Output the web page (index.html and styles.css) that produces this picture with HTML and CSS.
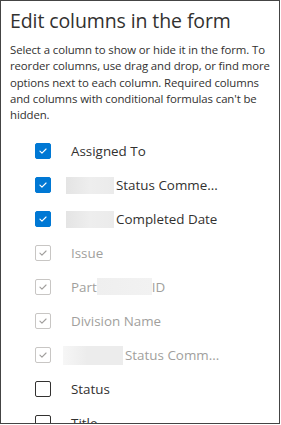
FILE: index.html
```html
<!DOCTYPE html>
<html lang="en">
<head>
  <meta charset="UTF-8">
  <title>Edit columns in the form</title>
  <link rel="stylesheet" href="styles.css">
</head>
<body>
  <div class="panel">
    <h2>Edit columns in the form</h2>
    <p class="intro">Select a column to show or hide it in the form. To reorder columns, use drag and drop, or find more options next to each column. Required columns and columns with conditional formulas can't be hidden.</p>

    <ul class="columns">
      <li class="row checked">
        <span class="box"><svg viewBox="0 0 16 16"><path d="M4.5 8.2l2.3 2.2 4.7-4.7"/></svg></span>
        <span class="label">Assigned To</span>
      </li>
      <li class="row checked">
        <span class="box"><svg viewBox="0 0 16 16"><path d="M4.5 8.2l2.3 2.2 4.7-4.7"/></svg></span>
        <span class="label"><span class="blur lead"></span>Status Comme...</span>
      </li>
      <li class="row checked">
        <span class="box"><svg viewBox="0 0 16 16"><path d="M4.5 8.2l2.3 2.2 4.7-4.7"/></svg></span>
        <span class="label"><span class="blur lead"></span>Completed Date</span>
      </li>
      <li class="row locked">
        <span class="box"><svg viewBox="0 0 16 16"><path d="M4.5 8.2l2.3 2.2 4.7-4.7"/></svg></span>
        <span class="label">Issue</span>
      </li>
      <li class="row locked">
        <span class="box"><svg viewBox="0 0 16 16"><path d="M4.5 8.2l2.3 2.2 4.7-4.7"/></svg></span>
        <span class="label">Part<span class="blur mid"></span>ID</span>
      </li>
      <li class="row locked">
        <span class="box"><svg viewBox="0 0 16 16"><path d="M4.5 8.2l2.3 2.2 4.7-4.7"/></svg></span>
        <span class="label">Division Name</span>
      </li>
      <li class="row locked">
        <span class="box"><svg viewBox="0 0 16 16"><path d="M4.5 8.2l2.3 2.2 4.7-4.7"/></svg></span>
        <span class="label"><span class="blur wide"></span>Status Comm...</span>
      </li>
      <li class="row">
        <span class="box"></span>
        <span class="label">Status</span>
      </li>
      <li class="row">
        <span class="box"></span>
        <span class="label">Title</span>
      </li>
    </ul>
  </div>
</body>
</html>
```

FILE: styles.css
```css
body {
  margin: 0;
  font-family: "Open Sans", "Noto Sans", Arial, sans-serif;
  color: #323130;
  background: #fff;
}
.panel {
  box-sizing: border-box;
  width: 280px;
  height: 424px;
  border: 1px solid #444;
  padding: 6px 9px 0 9px;
  overflow: hidden;
}
h2 {
  margin: 0;
  font-size: 19.5px;
  font-weight: 400;
  line-height: 28px;
  letter-spacing: -0.1px;
}
.intro {
  margin: 7px 0 0 0;
  font-size: 11.4px;
  line-height: 16.3px;
  letter-spacing: -0.1px;
}
.columns {
  list-style: none;
  margin: 20px 0 0 0;
  padding: 0 0 0 25px;
}
.row {
  display: flex;
  align-items: center;
  height: 16px;
  margin-bottom: 18px;
  font-size: 13.4px;
}
.box {
  box-sizing: border-box;
  width: 16px;
  height: 16px;
  border: 1px solid #323130;
  border-radius: 2px;
  flex: none;
  display: flex;
}
.box svg {
  width: 14px;
  height: 14px;
  fill: none;
  stroke-width: 1.3;
  stroke-linecap: round;
  stroke-linejoin: round;
}
.row.checked .box {
  background: #0078d4;
  border-color: #0078d4;
}
.row.checked .box svg {
  stroke: #fff;
}
.row.locked .box {
  border-color: #c8c6c4;
}
.row.locked .box svg {
  stroke: #a19f9d;
}
.row.locked .label {
  color: #a19f9d;
}
.label {
  margin-left: 20px;
  display: flex;
  align-items: center;
  white-space: nowrap;
}
.blur {
  display: inline-block;
  height: 17px;
  background: linear-gradient(90deg, #e4e4e4, #eeeeee 50%, #ebebeb);
}
.blur.lead {
  width: 48px;
  margin-left: -5px;
  margin-right: 2px;
}
.blur.mid {
  width: 55px;
  height: 17px;
  margin-top: -2px;
  background: linear-gradient(90deg, #efefef, #f2f2f2);
}
.blur.wide {
  width: 60px;
  height: 19px;
  margin-left: -8px;
  margin-right: 2px;
  background: linear-gradient(90deg, #f6f6f6, #ececec 40%, #ececec);
}
```
